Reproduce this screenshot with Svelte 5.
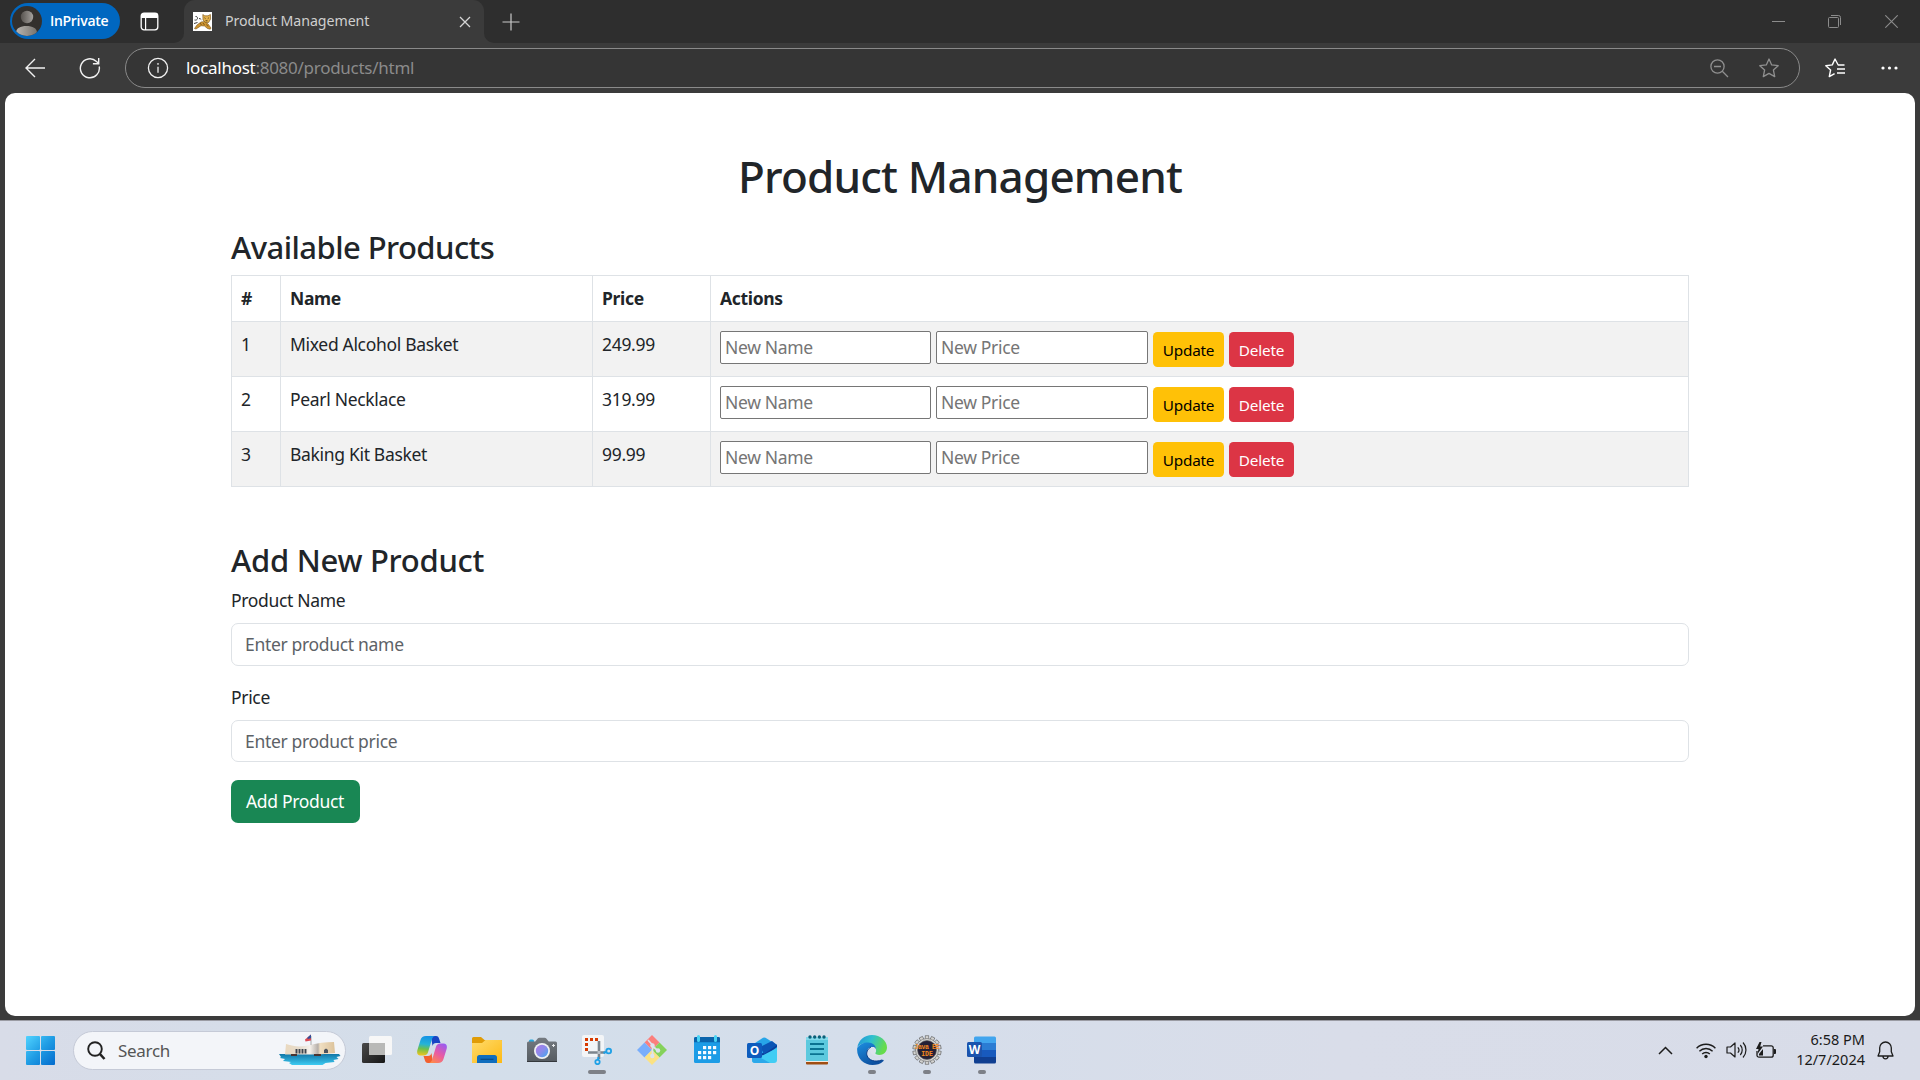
<script>
  const products = [
    { id: 1, name: 'Mixed Alcohol Basket', price: '249.99' },
    { id: 2, name: 'Pearl Necklace', price: '319.99' },
    { id: 3, name: 'Baking Kit Basket', price: '99.99' }
  ];
  // cells of the calendar icon: [column, row]
  const days = [[1, 0], [2, 0], [3, 0], [0, 1], [1, 1], [2, 1], [3, 1], [0, 2], [1, 2], [2, 2]];
  const teeth = Array.from({ length: 14 }, (_, i) => (i * 360) / 14);
</script>

<div class="screen">
  <header class="tabstrip">
    <div class="strip-left">
      <div class="profile">
        <svg width="30" height="30" viewBox="0 0 30 30">
          <defs>
            <linearGradient id="head" x1="0" x2="1"><stop offset="0" stop-color="#57534f" /><stop offset="1" stop-color="#a5a19d" /></linearGradient>
            <linearGradient id="bust" x1="0" x2="1"><stop offset="0" stop-color="#b9b5b0" /><stop offset="1" stop-color="#77736e" /></linearGradient>
            <clipPath id="round"><circle cx="15" cy="15" r="15" /></clipPath>
          </defs>
          <g clip-path="url(#round)">
            <rect width="30" height="30" fill="#33302d" />
            <circle cx="15" cy="11" r="6.2" fill="url(#head)" />
            <path d="M4 30v-3c0-5 4.500-7 10.500-7S25 22 25 27v3z" fill="url(#bust)" />
          </g>
        </svg>
        <span>InPrivate</span>
      </div>
      <svg class="tabs-icon" width="19" height="19" viewBox="0 0 19 19">
        <rect x="1.200" y="1.200" width="16.600" height="16.600" rx="2.800" fill="none" stroke="#fff" stroke-width="1.300" />
        <path d="M1 6V4a3 3 0 0 1 3-3h11a3 3 0 0 1 3 3v2z" fill="#fff" />
        <path d="M5.600 6v12" stroke="#fff" stroke-width="1.200" />
      </svg>
    </div>
    <div class="tab-well">
      <div class="tab">
        <svg width="19" height="19" viewBox="0 0 19 19">
          <rect width="19" height="19" fill="#fff" />
          <path d="M2.500 4.500c1.500-.5 2 1 2 2S3 8.500 1.500 8M6 6.500c1 0 1.800.4 2.300 1.200M1 11.500l3.500-1" stroke="#3b3b3b" fill="none" />
          <path d="M1.500 16.500l2.500-3.500 4-3 4-.5 3 2.500 3 4-.7 1.200-2.800-.7-3-2.500-3.500-.3-3 2-2 1.300z" fill="#cf9531" stroke="#765016" stroke-width=".6" />
          <path d="M9.800 2.500l2 1.300h3.200l2.400-1.300.2 4.500-2 3.500h-3.200L10 8z" fill="#e3b04b" stroke="#765016" stroke-width=".6" />
          <path d="M11.500 5.800l1 .8m3.300-.8l-1 .8M12.500 8.800h2" stroke="#46310f" stroke-width=".9" />
          <path d="M7 11l1.500 2M10 11l1.500 2M13.500 12.500l1.500 2" stroke="#6d4a12" stroke-width=".8" />
        </svg>
        <span>Product Management</span>
        <svg width="12" height="12" viewBox="0 0 12 12"><path d="M1 1l10 10M11 1L1 11" stroke="#d6d6d6" stroke-width="1.300" /></svg>
      </div>
    </div>
    <div class="strip-right">
      <svg width="18" height="18" viewBox="0 0 18 18"><path d="M9 .5v17M.5 9h17" stroke="#c9c9c9" stroke-width="1.200" /></svg>
      <div class="window-buttons">
        <svg width="13" height="13" viewBox="0 0 13 13"><path d="M0 6.500h13" stroke="#8c8c8c" /></svg>
        <svg width="13" height="13" viewBox="0 0 13 13" fill="none" stroke="#8c8c8c"><rect x=".5" y="2.500" width="10" height="10" rx="1" /><path d="M3 .5h7.500a2 2 0 0 1 2 2V10" /></svg>
        <svg width="13" height="13" viewBox="0 0 13 13"><path d="M.3.3l12.400 12.400M12.700.3L.3 12.700" stroke="#8c8c8c" stroke-width="1.100" /></svg>
      </div>
    </div>
  </header>

  <div class="toolbar">
    <svg class="back" width="20" height="20" viewBox="0 0 20 20" fill="none" stroke="#f1f1f1" stroke-width="1.400"><path d="M20 10H1M10 1L1 10l9 9" /></svg>
    <svg class="reload" width="22" height="22" viewBox="0 0 22 22" fill="none" stroke="#f1f1f1" stroke-width="1.400"><path d="M20.200 9.500A9.500 9.500 0 1 1 17.500 4.500L19.500 6.300M19.700 1v5.800h-5.800" /></svg>
    <div class="address">
      <svg width="22" height="22" viewBox="0 0 22 22" fill="none" stroke="#f1f1f1" stroke-width="1.300"><circle cx="11" cy="11" r="9.600" /><path d="M11 9.800v6" /><circle cx="11" cy="6.900" r=".5" fill="#f1f1f1" stroke-width=".8" /></svg>
      <span class="url"><b>localhost</b>:8080/products/html</span>
      <svg width="19" height="19" viewBox="0 0 19 19" fill="none" stroke="#8f8f8f" stroke-width="1.300"><circle cx="7.500" cy="7.500" r="6.600" /><path d="M12.300 12.300L18 18M4 7.500h7" /></svg>
      <svg class="star" width="20" height="20" viewBox="0 0 20 20" fill="none" stroke="#8f8f8f" stroke-width="1.300" stroke-linejoin="round"><path d="M10 1l2.700 5.900 6.500.8-4.800 4.300 1.300 6.600L10 15.400l-5.700 3.200 1.300-6.600L.8 7.700l6.500-.8z" /></svg>
    </div>
    <svg class="favorites" width="21" height="20" viewBox="0 0 21 20" fill="none" stroke="#fff" stroke-width="1.400" stroke-linejoin="round"><path d="M19.500 7h-6.300L10 1 7.300 6.900l-6.500.8 4.800 4.300-1.300 6.600 5.300-3M12 11h8M12 15h8" /></svg>
    <svg class="more" width="17" height="4" viewBox="0 0 17 4" fill="#fff"><circle cx="2" cy="2" r="1.600" /><circle cx="8.500" cy="2" r="1.600" /><circle cx="15" cy="2" r="1.600" /></svg>
  </div>

  <main class="page">
    <div class="container">
      <h1>Product Management</h1>
      <h3 class="available">Available Products</h3>
      <table>
        <colgroup><col class="c-id" /><col class="c-name" /><col class="c-price" /><col /></colgroup>
        <thead>
          <tr><th>#</th><th>Name</th><th>Price</th><th>Actions</th></tr>
        </thead>
        <tbody>
          {#each products as p (p.id)}
            <tr>
              <td>{p.id}</td>
              <td>{p.name}</td>
              <td>{p.price}</td>
              <td>
                <div class="actions">
                  <input class="in-name" type="text" placeholder="New Name" />
                  <input class="in-price" type="text" placeholder="New Price" />
                  <button class="update">Update</button>
                  <button class="delete">Delete</button>
                </div>
              </td>
            </tr>
          {/each}
        </tbody>
      </table>

      <h3 class="add">Add New Product</h3>
      <form>
        <label for="name">Product Name</label>
        <input id="name" type="text" placeholder="Enter product name" />
        <label for="price">Price</label>
        <input id="price" type="text" placeholder="Enter product price" />
        <button type="button" class="submit">Add Product</button>
      </form>
    </div>
  </main>

  <footer class="taskbar">
    <svg class="start" width="30" height="30" viewBox="0 0 30 30">
      <defs><linearGradient id="w1" gradientUnits="userSpaceOnUse" x1="0" y1="0" x2="29" y2="29"><stop offset="0" stop-color="#51d3ff" /><stop offset=".5" stop-color="#1f9ce4" /><stop offset="1" stop-color="#036bcd" /></linearGradient></defs>
      <g fill="url(#w1)"><rect x="0" y="0" width="14" height="14" rx="1" /><rect x="15" y="0" width="14" height="14" rx="1" /><rect x="0" y="15" width="14" height="14" rx="1" /><rect x="15" y="15" width="14" height="14" rx="1" /></g>
    </svg>

    <div class="search">
      <svg width="19" height="19" viewBox="0 0 19 19" fill="none" stroke="#222"><circle cx="8" cy="8" r="6.800" stroke-width="1.900" /><path d="M12.800 12.800L17.500 18" stroke-width="2.500" /></svg>
      <span>Search</span>
      <svg class="highlight" width="62" height="32" viewBox="0 0 62 32">
        <defs><linearGradient id="sea" x1="0" y1="0" x2="0" y2="1"><stop offset="0" stop-color="#1177a8" /><stop offset="1" stop-color="#3ecbf2" /></linearGradient>
          <linearGradient id="stone" x1="0" x2="1"><stop offset="0" stop-color="#ead9bf" /><stop offset=".3" stop-color="#e6dccd" /><stop offset=".5" stop-color="#f6f2ec" /><stop offset=".66" stop-color="#b5aea8" /><stop offset=".7" stop-color="#f0dfc2" /><stop offset="1" stop-color="#dcc29a" /></linearGradient></defs>
        <path d="M0 20h60l1.500 2-4 1 2 2-5 1 1 2-9 1-3 2H13l-3-2 2-1-8-1 2-2-5-1 1-1z" fill="url(#sea)" />
        <path d="M7 10c9 3 16 3 24 1 8-2 15-3 24-3l1 11-16 1.500H6z" fill="url(#stone)" />
        <path d="M17.500 15v4.500M20.500 15v4.500M23.500 15v4.500M26.500 15v4.500" stroke="#3e454f" stroke-width="1.900" />
        <path d="M45 19v-3l2-1.500 2 1.500v3z" fill="#4c535e" />
        <path d="M12 20h6v2h-6zM35 20h7v2h-7z" fill="#4a3430" />
        <path d="M32 2v9" stroke="#aaa" />
        <path d="M32 .5l-6 5 .5 2 5.500-1z" fill="#dc4a55" /><path d="M32 .5l-3.500 3V5l3.500-.8z" fill="#2f4f9b" />
      </svg>
    </div>

    <nav class="apps">
      <div class="app">
        <svg width="30" height="30" viewBox="0 0 30 30">
          <defs><linearGradient id="tv" x1="0" y1="0" x2="1" y2="1"><stop offset="0" stop-color="#4a4a4a" /><stop offset="1" stop-color="#171717" /></linearGradient></defs>
          <rect x="0" y="8" width="23" height="20" rx="1.500" fill="url(#tv)" /><rect x="7" y="1" width="23" height="19" rx="1.500" fill="#f7f7f7" /><path d="M7 8h16v12H8.500A1.500 1.500 0 0 1 7 18.500z" fill="#b9b9b7" />
        </svg>
      </div>
      <div class="app">
        <svg width="30" height="30" viewBox="0 0 30 30">
          <defs>
            <linearGradient id="cp1" x1=".3" y1="0" x2=".2" y2="1"><stop offset="0" stop-color="#1593e5" /><stop offset=".4" stop-color="#25b3d8" /><stop offset=".65" stop-color="#6dc04c" /><stop offset="1" stop-color="#f4c51c" /></linearGradient>
            <linearGradient id="cp2" x1=".8" y1="0" x2=".2" y2="1"><stop offset="0" stop-color="#9a5cf0" /><stop offset=".5" stop-color="#e85aa5" /><stop offset="1" stop-color="#ff8a4a" /></linearGradient>
          </defs>
          <path d="M14 1h5c2 0 2.600 1 3.200 3l1.300 4H19c-2 0-3 1-3.500 3z" fill="#1845c4" />
          <path d="M16 28h-5c-2 0-2.600-1-3.200-3l-1.300-4H11c2 0 3-1 3.500-3z" fill="#f2602f" />
          <path d="M9 1h9c-2 .4-2.700 2-3.300 4l-3.600 12c-.6 2-2 3.500-4.500 3.500H3.500C.5 20.500-.4 18 .4 15L3.500 5C4.300 2.500 6 1 9 1z" fill="url(#cp1)" />
          <path d="M21 28h-9c2-.4 2.700-2 3.300-4l3.600-12c.6-2 2-3.500 4.500-3.500h3.100c3 0 3.900 2.500 3.100 5.500L26.500 24c-.8 2.500-2.500 4-5.500 4z" fill="url(#cp2)" />
        </svg>
      </div>
      <div class="app">
        <svg width="30" height="30" viewBox="0 0 30 30">
          <defs><linearGradient id="fl" x1="0" y1="0" x2="1" y2="1"><stop offset="0" stop-color="#ffdb6c" /><stop offset="1" stop-color="#fdb913" /></linearGradient></defs>
          <path d="M0 3.500A1.500 1.500 0 0 1 1.500 2H9l3.500 3H29a1 1 0 0 1 1 1v5H0z" fill="#e09c07" />
          <path d="M0 8h10l3.500-3H29a1 1 0 0 1 1 1v22H0z" fill="url(#fl)" />
          <path d="M5 28v-5.500A2.500 2.500 0 0 1 7.500 20h15a2.500 2.500 0 0 1 2.500 2.500V28z" fill="#0f6dbd" /><path d="M8.500 24.300h13" stroke="#074a86" stroke-width="1.200" />
        </svg>
      </div>
      <div class="app">
        <svg width="30" height="30" viewBox="0 0 30 30">
          <defs><linearGradient id="lens" x1="0" y1="0" x2="1" y2="1"><stop offset="0" stop-color="#b07be8" /><stop offset=".5" stop-color="#8b8bea" /><stop offset="1" stop-color="#3ea8ef" /></linearGradient>
            <linearGradient id="cam" x1="0" y1="0" x2="0" y2="1"><stop offset="0" stop-color="#757b81" /><stop offset="1" stop-color="#555b61" /></linearGradient></defs>
          <path d="M2 7V6a1.500 1.500 0 0 1 1.500-1.500h2A1.500 1.500 0 0 1 7 6v1z" fill="#25a8e0" />
          <path d="M1.500 6.500h6.800l2.400-3a2 2 0 0 1 1.600-.8h5.400a2 2 0 0 1 1.600.8l2.400 3h6.800A1.500 1.500 0 0 1 30 8v18.500H0V8a1.500 1.500 0 0 1 1.500-1.500z" fill="url(#cam)" />
          <path d="M0 26h30v1H0z" fill="#34383c" />
          <circle cx="15" cy="16" r="8" fill="#eef0f2" /><circle cx="15" cy="16" r="6.200" fill="url(#lens)" />
          <path d="M26.500 9v3M25 10.500h3" stroke="#e8eaec" />
        </svg>
      </div>
      <div class="app">
        <svg width="30" height="30" viewBox="0 0 30 30">
          <rect x="0" y="0" width="22" height="22" rx="2" fill="#f3f5f7" />
          <path d="M3 3h3v3H3zM8 3h3v3H8zM13 3h3v3h-3zM3 8h3v3H3zM3 13h3v3H3z" fill="#d83b01" />
          <path d="M17 6v18M6 17.500h17" stroke="#7d858d" stroke-width="2.600" />
          <path d="M15.500 16h3v3h-3z" fill="#b8bec4" />
          <circle cx="26.700" cy="16" r="2.400" fill="none" stroke="#1ea0e6" stroke-width="1.800" /><path d="M21.500 18l3.300-1.200M16.500 22l-.5 3" stroke="#1ea0e6" stroke-width="2" />
          <circle cx="15.500" cy="27" r="2.200" fill="none" stroke="#1ea0e6" stroke-width="1.800" />
        </svg>
        <i class="wide"></i>
      </div>
      <div class="app">
        <svg width="30" height="30" viewBox="0 0 30 30">
          <path d="M15 0l7.500 7.500L15 15 7.500 7.500z" fill="#fb7f7c" /><path d="M22.500 7.500L30 15l-7.500 7.500L15 15z" fill="#85d25b" />
          <path d="M7.500 7.500L15 15l-7.500 7.500L0 15z" fill="#79aefb" /><path d="M15 15l7.500 7.500L15 30l-7.500-7.500z" fill="#fbe283" />
          <path d="M11 5l4.500 5v11M15.500 11l5 4.500" stroke="#dce3ee" stroke-width="1.700" fill="none" /><g fill="#dce3ee"><circle cx="15.500" cy="10.500" r="2.200" /><circle cx="21" cy="15.500" r="2.200" /><circle cx="15.300" cy="21" r="2.200" /></g>
        </svg>
      </div>
      <div class="app">
        <svg width="30" height="30" viewBox="0 0 30 30">
          <rect x="2" y="2" width="26" height="26" rx="1.500" fill="#1c9ce6" /><path d="M2 7.300V3.500A1.500 1.500 0 0 1 3.500 2h23A1.500 1.500 0 0 1 28 3.500v3.800z" fill="#0b64ac" />
          <path d="M6.500 1.500v4M23.500 1.500v4" stroke="#49d4f4" stroke-width="3" stroke-linecap="round" />
          <g fill="#f4faff">{#each days as [c, r]}<rect x={6 + c * 5} y={11 + r * 5} width="3.200" height="3.200" />{/each}</g>
        </svg>
      </div>
      <div class="app">
        <svg width="30" height="30" viewBox="0 0 30 30">
          <path d="M5 10L16 2.800a2.500 2.500 0 0 1 2.500 0L30 10v6L10 22z" fill="#27a5e8" /><path d="M14 19L30 9.500V12L17 22z" fill="#0a3f9c" />
          <path d="M13 12L25 6l5 4-13 9z" fill="#0b55b5" />
          <path d="M5 26l25-13v12a3 3 0 0 1-3 3H8a3 3 0 0 1-3-2z" fill="#41cdf4" /><path d="M5 18l18 10H8a3 3 0 0 1-3-3z" fill="#2ba8ea" />
          <rect x="0" y="8" width="15" height="15" rx="1.500" fill="#0d5cbd" /><text x="7.500" y="20" text-anchor="middle" class="logo">O</text>
        </svg>
      </div>
      <div class="app">
        <svg width="30" height="30" viewBox="0 0 30 30">
          <path d="M4 26h22v2.500a1 1 0 0 1-1 1H5a1 1 0 0 1-1-1z" fill="#a04e12" /><path d="M4 26h22v1H4z" fill="#f3e9df" />
          <path d="M4 2h22v24H4z" fill="#5cc9de" /><path d="M4 2h22v3H4z" fill="#83d9ea" />
          <g fill="#0a5f78"><circle cx="8" cy="2" r="1.700" /><circle cx="12.700" cy="2" r="1.700" /><circle cx="17.400" cy="2" r="1.700" /><circle cx="22" cy="2" r="1.700" /></g>
          <path d="M8 9h14M8 14h14M8 19.200h14" stroke="#0a7391" stroke-width="1.800" />
        </svg>
      </div>
      <div class="app">
        <svg width="30" height="30" viewBox="0 0 30 30">
          <defs>
            <linearGradient id="e1" x1="0" y1="0" x2="1" y2=".3"><stop offset="0" stop-color="#2190d8" /><stop offset=".5" stop-color="#2fc0cf" /><stop offset="1" stop-color="#66dc4c" /></linearGradient>
            <linearGradient id="e2" x1="0" y1="0" x2=".6" y2="1"><stop offset="0" stop-color="#1c8fe0" /><stop offset="1" stop-color="#0c4e9e" /></linearGradient>
          </defs>
          <path d="M.3 12.500C1.500 5 7.500 0 15 0c8.500 0 15 6 15 12.500 0 4.500-3.500 7.500-7.500 7.500-3 0-4.500-1-4.500-2 0-.8 1-1.300 1-3.300C19 11 15 8 10.500 8 5.500 8 1.800 10 .3 12.500z" fill="url(#e1)" />
          <path d="M.2 13C2.300 9.500 6.500 7.500 11 7.500c5 0 8.300 3.300 8 7.500-.5-2-2.500-3.500-4.700-3-3.500.7-5.300 4-4.300 8 1.500 5.500 8.500 7.500 15.500 4.800.8-.3 1.600.3 1 1.200C23.500 29 19.500 30 15.500 30 6.500 30-.8 22.500.2 13z" fill="url(#e2)" />
          <path d="M14 12c-3.500 2-5 5.500-4 8.500 1.500 5 8 7 15 4.500" stroke="#0b3f8a" stroke-width="1" fill="none" />
          <path d="M13.500 13.500c-1 3 .5 6.800 5.500 7.500 4 .5 8-1 10-4-2 3-5 3.500-8 3-3-.4-3-1.700-2.300-2.700.8-1.300.5-3.800-1.200-4.800-1.500-.8-3.500-.3-4 1z" fill="#dce2ed" />
        </svg>
        <i></i>
      </div>
      <div class="app">
        <svg width="30" height="30" viewBox="0 0 30 30">
          <g fill="#d4d4d2" stroke="#5a5a5a" stroke-width=".6">{#each teeth as a}<rect x="13.200" y=".8" width="3.600" height="5" transform="rotate({a} 15 15)" />{/each}</g>
          <circle cx="15" cy="15" r="11.500" fill="#d6d6d4" stroke="#666" stroke-width=".6" /><circle cx="15" cy="15" r="9.500" fill="#252035" stroke="#666" stroke-width=".6" />
          <text x="15" y="14.200" text-anchor="middle" class="java" textLength="25">Java EE</text><text x="15" y="20.800" text-anchor="middle" class="java">IDE</text>
        </svg>
        <i></i>
      </div>
      <div class="app">
        <svg width="30" height="30" viewBox="0 0 30 30">
          <path d="M7 3a1.500 1.500 0 0 1 1.500-1.500h19A1.500 1.500 0 0 1 29 3v5H7z" fill="#41a5ee" /><path d="M7 8h22v7H7z" fill="#2b7cd3" /><path d="M7 15h22v7H7z" fill="#185abd" /><path d="M7 22h22v5a1.500 1.500 0 0 1-1.500 1.500h-19A1.500 1.500 0 0 1 7 27z" fill="#103f91" />
          <rect x="0" y="7" width="15" height="15" rx="1.500" fill="#1b54ad" /><text x="7.500" y="18.800" text-anchor="middle" class="logo">W</text>
        </svg>
        <i></i>
      </div>
    </nav>

    <div class="tray">
      <svg class="up" width="15" height="9" viewBox="0 0 15 9" fill="none" stroke="#1c1c1c" stroke-width="1.500"><path d="M1 8l6.500-6.500L14 8" /></svg>
      <svg class="wifi" width="20" height="17" viewBox="0 0 20 17" fill="none" stroke="#1c1c1c" stroke-width="1.400"><path d="M.6 6.200a13.300 13.300 0 0 1 18.800 0M3.400 9.200a9.400 9.400 0 0 1 13.200 0M6.200 12a5.400 5.400 0 0 1 7.600 0" /><circle cx="10" cy="14.500" r="1.700" fill="#1c1c1c" stroke="none" /></svg>
      <svg class="sound" width="21" height="18" viewBox="0 0 21 18" fill="none" stroke="#1c1c1c" stroke-width="1.200" stroke-linejoin="round"><path d="M1 6h3.500L9 2v14l-4.500-4H1z" /><path d="M11.800 6.300a4 4 0 0 1 0 5.400M14.300 4a7.500 7.500 0 0 1 0 10M17 1.500a11 11 0 0 1 0 15" /></svg>
      <svg class="battery" width="20" height="17" viewBox="0 0 20 17"><path d="M7 3.800h8.200a2 2 0 0 1 2 2v7.400a2 2 0 0 1-2 2H3a2 2 0 0 1-2-2V9" fill="none" stroke="#1c1c1c" stroke-width="1.300" /><path d="M18 7h1a1 1 0 0 1 1 1v3a1 1 0 0 1-1 1h-1z" fill="#1c1c1c" /><path d="M3.500 0L0 7h2.500L1.500 12 7 4.500H4.200L5.500 0zM3 13.500V12l4-5v6.500z" fill="#1c1c1c" /></svg>
      <div class="clock"><span>6:58 PM</span><span>12/7/2024</span></div>
      <svg class="bell" width="17" height="19" viewBox="0 0 17 19" fill="none" stroke="#1c1c1c" stroke-width="1.300" stroke-linejoin="round"><path d="M8.500 1a5.800 5.800 0 0 0-5.800 5.800v4L1 15h15l-1.700-4.200v-4A5.800 5.800 0 0 0 8.500 1zM6 15.300a2.500 2.500 0 0 0 5 0" /></svg>
    </div>
  </footer>
</div>

<style>
  :global(body) { margin: 0; }
  * { box-sizing: border-box; }
  svg { display: block; flex: none; }
  .screen { width: 1920px; height: 1080px; display: flex; flex-direction: column; background: #3b3b3b; font-family: 'Noto Sans', 'Open Sans', sans-serif; overflow: hidden; }

  .tabstrip { display: flex; height: 43px; flex: none; }
  .strip-left { width: 184px; background: #2e2e2e; border-bottom-right-radius: 10px; display: flex; align-items: center; padding-left: 10px; }
  .profile { width: 110px; height: 36px; margin-top: -1px; border-radius: 18px; background: #0067c0; display: flex; align-items: center; gap: 8px; padding-left: 2px; color: #fff; font: 600 14px 'Open Sans', sans-serif; letter-spacing: -0.3px; }
  .profile span { margin-top: -1px; }
  .tabs-icon { margin-left: 20px; margin-top: -1px; }
  .tab-well { width: 300px; background: #2e2e2e; }
  .tab { height: 43px; background: #3b3b3b; border-radius: 11px 11px 0 0; display: flex; align-items: center; padding: 0 13px 0 9px; color: #cfcfcf; font-size: 14.2px; letter-spacing: -0.05px; }
  .tab span { flex: 1; margin: -2px 0 0 13px; }
  .strip-right { flex: 1; background: #2e2e2e; border-bottom-left-radius: 10px; display: flex; align-items: center; padding: 0 22px 0 18px; }
  .window-buttons { margin-left: auto; display: flex; gap: 44px; }
  .window-buttons svg:not(:last-child) { margin-left: -0.500px; }

  .toolbar { display: flex; align-items: center; height: 50px; flex: none; padding: 0 22px 0 25px; }
  .reload { margin-left: 34px; }
  .address { width: 1675px; height: 40px; margin-left: 24px; border: 1px solid #8a8a8a; border-radius: 20px; background: #353535; display: flex; align-items: center; padding: 0 20px 0 21px; }
  .url { flex: 1; margin-left: 17px; margin-top: -1px; font-size: 17px; letter-spacing: -0.27px; color: #8b8b8b; }
  .url b { font-weight: 400; color: #fff; }
  .star { margin-left: 30px; }
  .favorites { margin-left: 25px; }
  .more { margin-left: auto; }

  .page { height: 923px; flex: none; margin: 0 5px; background: #fff; border-radius: 10px; padding-top: 56px; color: #212529; }
  .container { width: 1458px; margin: 0 auto; font-size: 17.5px; letter-spacing: -0.32px; line-height: 27px; }
  h1, h3 { margin: 0; font-weight: 500; }
  h1 { font-size: 44px; line-height: 54px; letter-spacing: -0.8px; text-align: center; }
  h3 { font-size: 31px; line-height: 38px; letter-spacing: -0.56px; }
  .available { margin: 25px 0 9px; }
  .add { margin: 54px 0 8px; letter-spacing: -0.27px; }

  table { width: 100%; table-layout: fixed; border-spacing: 0; border-top: 1px solid #dee2e6; border-left: 1px solid #dee2e6; }
  .c-id { width: 49px; }
  .c-name { width: 312px; }
  .c-price { width: 118px; }
  th, td { text-align: left; vertical-align: top; padding: 9px 9px 0; border-right: 1px solid #dee2e6; border-bottom: 1px solid #dee2e6; }
  th { height: 46px; }
  td { height: 55px; }
  tbody tr:nth-child(odd) td { background: #f2f2f2; }
  .actions { display: flex; align-items: flex-start; }
  input, button { font-family: inherit; letter-spacing: inherit; margin: 0; }
  input { font-size: 17.5px; background: #fff; outline: 0; }
  .actions input { height: 33px; border: 1px solid #767676; border-radius: 2px; padding: 0 4px 2px; }
  .actions input::placeholder { color: #757575; }
  .in-name { width: 211px; }
  .in-price { width: 212px; margin-left: 5px; }
  .actions button { height: 35px; margin: 1px 0 0 5px; padding: 0; border: 0; border-radius: 4.5px; font-size: 15.3px; letter-spacing: -0.2px; }
  .update { width: 71px; background: #ffc107; color: #000; }
  .delete { width: 65px; background: #dc3545; color: #fff; }

  form { display: flex; flex-direction: column; align-items: flex-start; }
  form input { width: 100%; height: 43px; margin: 9px 0 18px; border: 1px solid #dee2e6; border-radius: 7px; padding: 0 13px 1px; }
  form input::placeholder { color: #5d6267; }
  #price { height: 42px; padding-bottom: 0; }
  .submit { width: 129px; height: 43px; border: 0; border-radius: 7px; background: #198754; color: #fff; font-size: 17.5px; padding: 0 1px 2px 0; }

  .taskbar { height: 60px; margin-top: auto; flex: none; border-top: 1px solid #9b9ca4; background: linear-gradient(90deg, #d8dce8, #d3deea 25%, #d5deeb 45%, #d9dde9 70%, #d8dce8); display: flex; align-items: center; }
  .start { margin-left: 26px; }
  .search { width: 273px; height: 39px; margin-left: 17px; margin-top: -1px; border-radius: 20px; background: #f3f5f9; border: 1px solid #c5cad7; display: flex; align-items: center; padding: 0 4px 0 13px; color: #555; font-size: 17px; letter-spacing: -0.3px; }
  .search span { margin-left: 12px; flex: 1; }
  .apps { display: flex; margin-left: 3px; }
  .app { width: 55px; height: 59px; display: flex; flex-direction: column; align-items: center; padding-top: 14px; }
  .app i { width: 8px; height: 4px; margin-top: 5px; border-radius: 2px; background: #7d8087; }
  .app .wide { width: 18px; }
  .logo { font: 700 12px 'Open Sans', sans-serif; fill: #fff; }
  .java { font: 700 6.5px 'Liberation Mono', monospace; fill: #f58a1f; }
  .tray { margin-left: auto; display: flex; align-items: center; padding-right: 26px; }
  .tray > svg { margin-top: -1px; }
  .wifi { margin-left: 23px; }
  .sound { margin-left: 10px; }
  .battery { margin-left: 9px; }
  .clock { width: 89px; display: flex; flex-direction: column; text-align: right; font-size: 14.5px; line-height: 20px; color: #1a1a1a; margin-top: -3px; }
  .bell { margin-left: 12px; }
</style>
